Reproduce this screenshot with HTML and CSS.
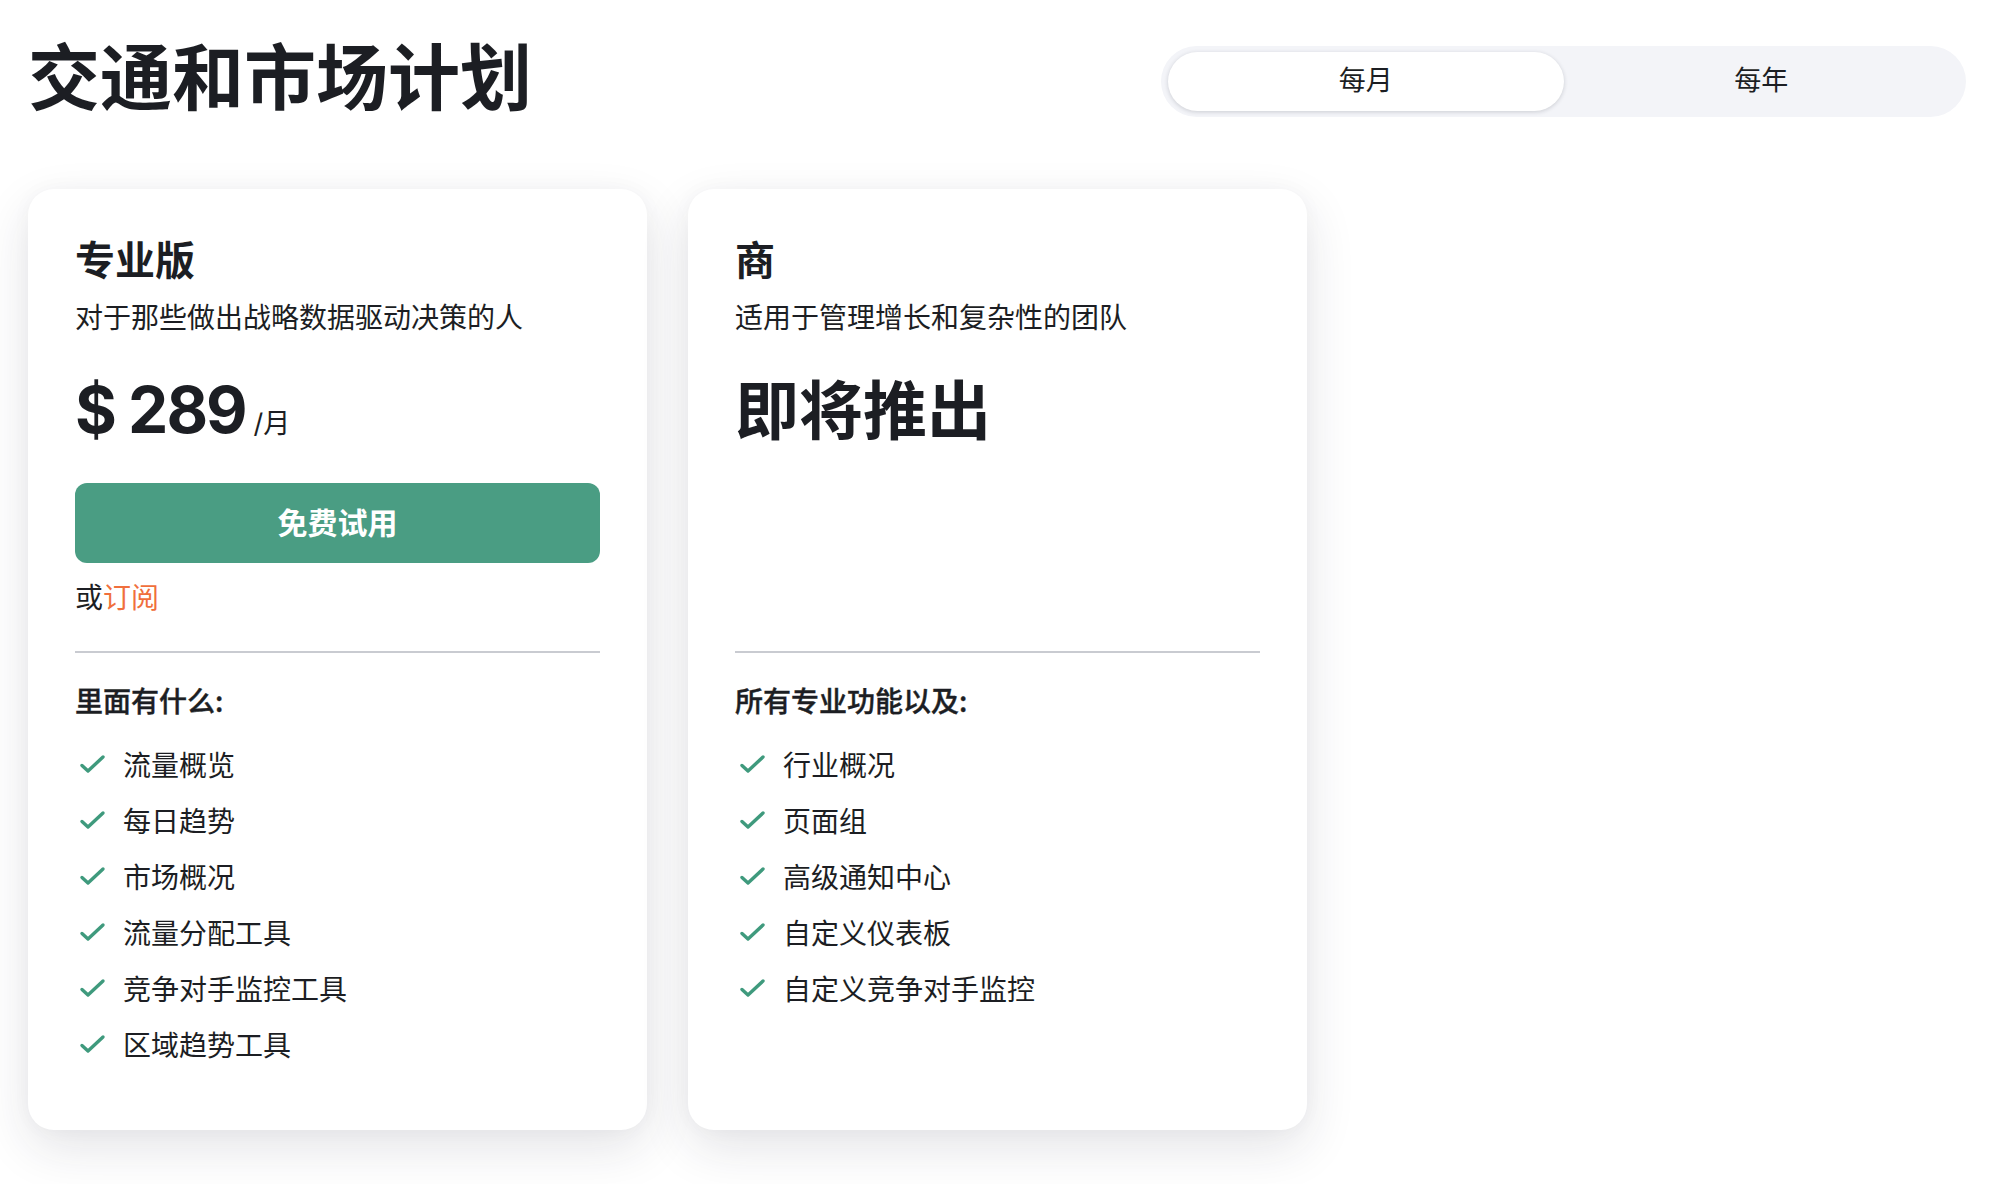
FILE: index.html
```html
<!DOCTYPE html>
<html lang="zh-CN">
<head>
<meta charset="utf-8">
<title>交通和市场计划</title>
<link rel="stylesheet" href="styles.css">
</head>
<body>
<div class="page">
  <header class="header">
    <h1 class="title">交通和市场计划</h1>
    <div class="toggle">
      <button class="toggle-btn active">每月</button>
      <button class="toggle-btn">每年</button>
    </div>
  </header>

  <main class="plans">
    <section class="card">
      <h2 class="plan-name">专业版</h2>
      <p class="plan-desc">对于那些做出战略数据驱动决策的人</p>
      <div class="price"><span class="amount">$ 289</span><span class="per">/月</span></div>
      <div class="cta">
        <button class="trial">免费试用</button>
        <p class="alt">或<a class="subscribe" href="#">订阅</a></p>
      </div>
      <hr class="divider">
      <h3 class="features-title">里面有什么:</h3>
      <ul class="features">
        <li><svg class="check" viewBox="0 0 32 32"><path d="M7 17.5 L13 23 L28 9"/></svg>流量概览</li>
        <li><svg class="check" viewBox="0 0 32 32"><path d="M7 17.5 L13 23 L28 9"/></svg>每日趋势</li>
        <li><svg class="check" viewBox="0 0 32 32"><path d="M7 17.5 L13 23 L28 9"/></svg>市场概况</li>
        <li><svg class="check" viewBox="0 0 32 32"><path d="M7 17.5 L13 23 L28 9"/></svg>流量分配工具</li>
        <li><svg class="check" viewBox="0 0 32 32"><path d="M7 17.5 L13 23 L28 9"/></svg>竞争对手监控工具</li>
        <li><svg class="check" viewBox="0 0 32 32"><path d="M7 17.5 L13 23 L28 9"/></svg>区域趋势工具</li>
      </ul>
    </section>

    <section class="card">
      <h2 class="plan-name">商</h2>
      <p class="plan-desc">适用于管理增长和复杂性的团队</p>
      <div class="price soon">即将推出</div>
      <div class="cta"></div>
      <hr class="divider">
      <h3 class="features-title">所有专业功能以及:</h3>
      <ul class="features">
        <li><svg class="check" viewBox="0 0 32 32"><path d="M7 17.5 L13 23 L28 9"/></svg>行业概况</li>
        <li><svg class="check" viewBox="0 0 32 32"><path d="M7 17.5 L13 23 L28 9"/></svg>页面组</li>
        <li><svg class="check" viewBox="0 0 32 32"><path d="M7 17.5 L13 23 L28 9"/></svg>高级通知中心</li>
        <li><svg class="check" viewBox="0 0 32 32"><path d="M7 17.5 L13 23 L28 9"/></svg>自定义仪表板</li>
        <li><svg class="check" viewBox="0 0 32 32"><path d="M7 17.5 L13 23 L28 9"/></svg>自定义竞争对手监控</li>
      </ul>
    </section>
  </main>
</div>
</body>
</html>
```

FILE: styles.css
```css
* { box-sizing: border-box; }

html, body {
  margin: 0;
  padding: 0;
  background: #ffffff;
}

body {
  font-family: "Inter", "Noto Sans CJK SC", sans-serif;
  color: #1c1e23;
}

.page {
  padding: 30px 24px 54px 28px;
}

.header {
  display: flex;
  justify-content: space-between;
  align-items: flex-start;
}

.title {
  margin: 0;
  font-family: "Noto Sans CJK SC", sans-serif;
  font-size: 72px;
  line-height: 86px;
  font-weight: 700;
  color: #1c1e23;
}

.toggle {
  margin-top: 16px;
  width: 805px;
  height: 71px;
  padding: 6px 7px;
  border-radius: 36px;
  background: #f3f4f8;
  display: flex;
}

.toggle-btn {
  flex: 1;
  border: none;
  background: transparent;
  border-radius: 30px;
  font-family: "Noto Sans CJK SC", sans-serif;
  font-size: 27px;
  color: #1c1e23;
  padding: 0 0 6px;
}

.toggle-btn.active {
  background: #ffffff;
  box-shadow: 0 1px 4px rgba(30, 35, 50, 0.18);
}

.plans {
  margin-top: 72px;
  display: flex;
  gap: 41px;
  align-items: stretch;
}

.card {
  width: 619px;
  background: #ffffff;
  border-radius: 26px;
  padding: 43px 47px 66px;
  box-shadow: 0 18px 50px rgba(30, 35, 60, 0.12), 0 0 20px rgba(30, 35, 60, 0.03);
}

.plan-name {
  margin: 0;
  font-family: "Noto Sans CJK SC", sans-serif;
  font-size: 40px;
  line-height: 52px;
  font-weight: 700;
}

.plan-desc {
  margin: 12px 0 0;
  font-family: "Noto Sans CJK SC", sans-serif;
  font-size: 28px;
  line-height: 40px;
}

.price {
  margin-top: 35px;
  height: 77px;
  line-height: 77px;
  font-weight: 700;
  white-space: nowrap;
}

.amount {
  font-family: "Inter", sans-serif;
  font-size: 64px;
  letter-spacing: -2px;
}

.per {
  margin-left: 8px;
  font-family: "Inter", "Noto Sans CJK SC", sans-serif;
  font-size: 27px;
  font-weight: 400;
}

.price.soon {
  font-family: "Noto Sans CJK SC", sans-serif;
  font-size: 64px;
  line-height: 70px;
}

.cta {
  margin-top: 35px;
  height: 133px;
}

.trial {
  display: block;
  width: 100%;
  height: 80px;
  border: none;
  border-radius: 12px;
  background: #4a9d83;
  color: #ffffff;
  font-family: "Noto Sans CJK SC", sans-serif;
  font-size: 30px;
  font-weight: 700;
  padding: 0 0 4px;
}

.alt {
  margin: 13px 0 0;
  font-family: "Noto Sans CJK SC", sans-serif;
  font-size: 28px;
  line-height: 40px;
}

.subscribe {
  color: #f06f3c;
  text-decoration: none;
}

.divider {
  margin: 35px 0 0;
  border: none;
  height: 2px;
  background: #c9cbd1;
}

.features-title {
  margin: 27px 0 0;
  font-family: "Noto Sans CJK SC", sans-serif;
  font-size: 28px;
  line-height: 40px;
  font-weight: 500;
  -webkit-text-stroke: 0.4px currentColor;
}

.features {
  list-style: none;
  margin: 24px 0 0;
  padding: 0;
  display: flex;
  flex-direction: column;
  gap: 16px;
}

.features li {
  display: flex;
  align-items: center;
  gap: 16px;
  font-family: "Noto Sans CJK SC", sans-serif;
  font-size: 28px;
  line-height: 40px;
}

.check {
  width: 32px;
  height: 32px;
  flex: none;
}

.check path {
  fill: none;
  stroke: #3f9a7d;
  stroke-width: 3.4;
  stroke-linecap: round;
  stroke-linejoin: round;
}
```
